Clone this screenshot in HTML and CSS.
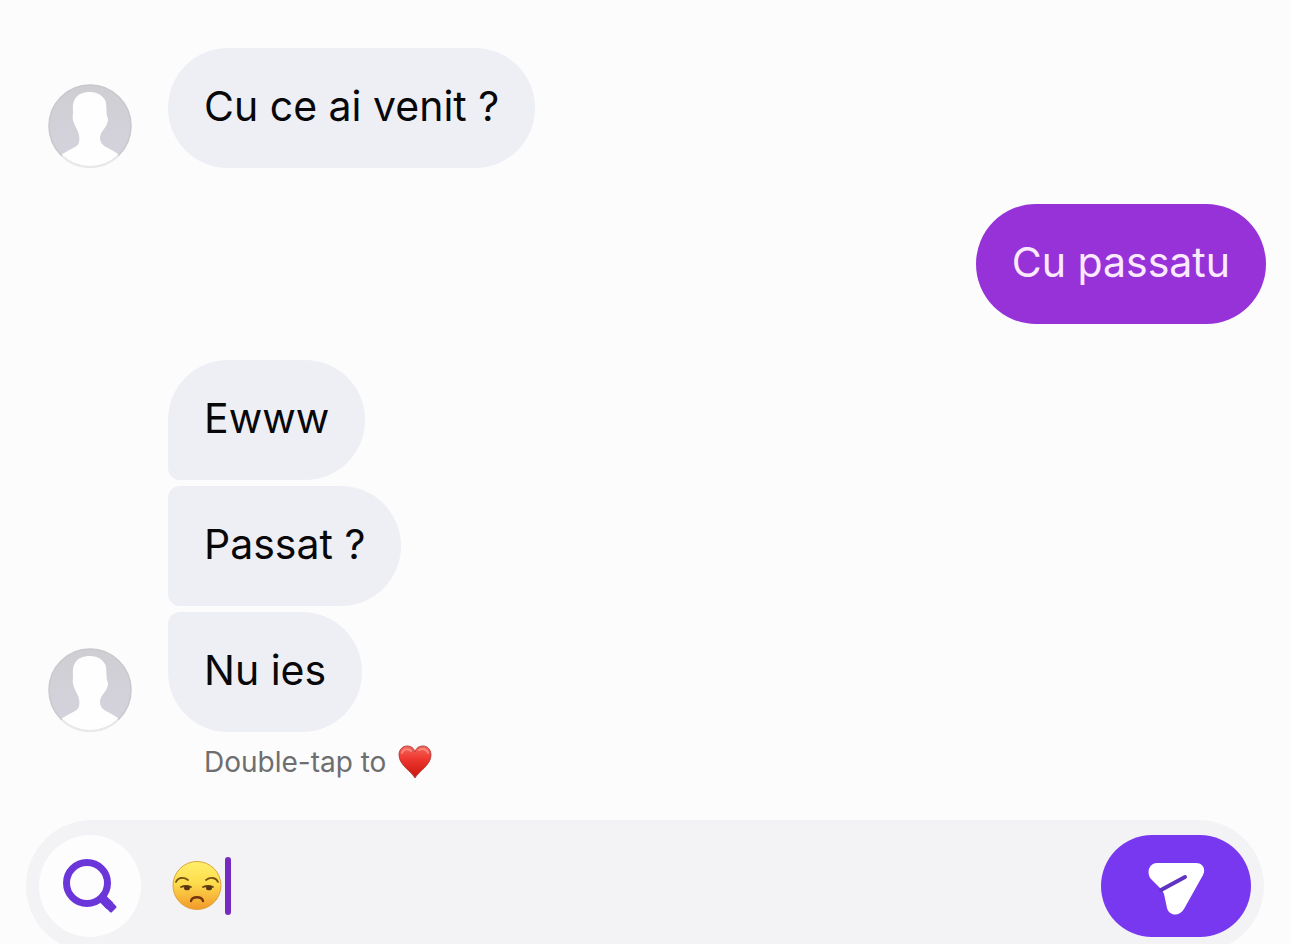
FILE: index.html
```
<!DOCTYPE html>
<html lang="ro">
<head>
  <meta charset="UTF-8">
  <meta name="viewport" content="width=device-width, initial-scale=1.0">
  <title>Chat</title>
  <link rel="stylesheet" href="styles.css">
</head>
<body>
  <!-- shared avatar silhouette -->
  <svg width="0" height="0" class="defs" aria-hidden="true">
    <defs>
      <linearGradient id="avatar-bg" x1="0" y1="0" x2="0" y2="1">
        <stop offset="0" stop-color="#cfced2"/>
        <stop offset="1" stop-color="#d5d4df"/>
      </linearGradient>
      <clipPath id="avatar-clip"><circle cx="42" cy="42" r="41"/></clipPath>
      <symbol id="avatar" viewBox="0 0 84 84">
        <circle cx="42" cy="42" r="41" fill="url(#avatar-bg)"/>
        <path clip-path="url(#avatar-clip)" fill="#fefefe" d="M42 8C49 8 54 11 57 16C59 20 58 26 59 32Q61 35 59 40C57 45 53 47 52 53C52 58 54 61 58 63C63 66 68 68 71 71L77 84H8L13 71C17 68 22 66 27 63C31 61 32 57 31 51C30 46 27 43 26 39Q24 35 25 30C25 25 24 20 27 15C30 10 35 8 42 8Z"/>
        <circle cx="42" cy="42" r="41" fill="none" stroke="#c9c8cd" stroke-width="1.5"/>
        <path d="M14 72A41 41 0 0 0 70 72" fill="none" stroke="#e9e9ec" stroke-width="2"/>
      </symbol>
    </defs>
  </svg>

  <main class="messages">
    <div class="row">
      <svg class="avatar" role="img" aria-label="Profile picture"><use href="#avatar"/></svg>
      <div class="group">
        <p class="bubble">Cu ce ai venit ?</p>
      </div>
    </div>

    <div class="row sent">
      <p class="bubble">Cu passatu</p>
    </div>

    <div class="row">
      <svg class="avatar" role="img" aria-label="Profile picture"><use href="#avatar"/></svg>
      <div class="group">
        <p class="bubble first">Ewww</p>
        <p class="bubble middle">Passat ?</p>
        <p class="bubble last">Nu ies</p>
      </div>
    </div>

    <p class="hint">
      Double-tap to
      <svg class="heart" viewBox="0 0 34 34" role="img" aria-label="heart">
        <defs>
          <linearGradient id="heart-fill" x1="0" y1="0" x2="0" y2="1">
            <stop offset="0" stop-color="#f4675c"/>
            <stop offset=".4" stop-color="#ee382f"/>
            <stop offset="1" stop-color="#c9150f"/>
          </linearGradient>
        </defs>
        <path d="M17 33C13 26 1 20 1 10C1 4 5 1 9 1C13 1 16 3 17 7C18 3 21 1 25 1C29 1 33 4 33 10C33 20 21 26 17 33Z" fill="url(#heart-fill)" stroke="#a8342e" stroke-width=".8"/>
        <path d="M4 8C5 4 10 3 13 6M21 5C24 3 29 4 30 8" fill="none" stroke="#fb9c92" stroke-width="2" stroke-linecap="round" opacity=".7"/>
      </svg>
    </p>
  </main>

  <form class="composer">
    <button type="button" class="search" aria-label="Search">
      <svg viewBox="0 0 56 56">
        <circle cx="25" cy="25" r="20.5" fill="none" stroke="#6b36d9" stroke-width="7"/>
        <path d="M38 38L48 48" stroke="#6b36d9" stroke-width="9"/>
        <path d="M47 43L53 49L49 53L43 47Z" fill="#6b36d9" stroke="#6b36d9" stroke-width="3" stroke-linejoin="round"/>
      </svg>
    </button>
    <div class="field">
      <svg class="emoji" viewBox="0 0 50 50" role="img" aria-label="unamused face">
        <defs>
          <linearGradient id="face" x1="0" y1="0" x2="0" y2="1">
            <stop offset="0" stop-color="#fff06a"/>
            <stop offset=".45" stop-color="#fddc4c"/>
            <stop offset="1" stop-color="#f2982a"/>
          </linearGradient>
        </defs>
        <circle cx="25" cy="24.500" r="24" fill="url(#face)" stroke="#dfa43b" stroke-width="1"/>
        <path d="M4 21C6 16 12 16 16 19M34 19C38 16 44 16 46 21" fill="none" stroke="#785214" stroke-width="1.8" stroke-linecap="round"/>
        <path d="M9 26Q14 24 19 26M31 26Q36 24 41 26" fill="none" stroke="#644013" stroke-width="1.8" stroke-linecap="round"/>
        <ellipse cx="15" cy="27" rx="3" ry="2.3" fill="#573510"/>
        <ellipse cx="37" cy="27" rx="3" ry="2.3" fill="#573510"/>
        <path d="M19 40C20 35 30 35 31 40" fill="none" stroke="#73350f" stroke-width="2.4" stroke-linecap="round"/>
      </svg>
      <span class="caret"></span>
      <input type="text" aria-label="Message">
    </div>
    <button type="submit" class="send" aria-label="Send">
      <svg viewBox="0 0 58 58">
        <path d="M10 6H49C56 6 59 12 56 18L37 52C32 60 22 59 20 51L17 37C16 35 16 34 14 32L4 22C-1 16 2 6 10 6Z" fill="#fff"/>
        <path d="M14 33L38 20" stroke="#6034c2" stroke-width="4" stroke-linecap="round"/>
      </svg>
    </button>
  </form>
</body>
</html>
```
FILE: styles.css
```
:root {
  --bg: #fcfcfc;
  --received: #eeeff4;
  --sent: #9632d8;
  --accent: #7838f0;
  --radius: 60px;
}

* {
  box-sizing: border-box;
  margin: 0;
  padding: 0;
}

body {
  height: 100vh;
  overflow: hidden;
  background: var(--bg);
  color: #08080a;
  font-family: Inter, "Liberation Sans", sans-serif;
}

.defs {
  position: absolute;
}

.messages {
  padding: 48px 24px 0 48px;
}

.row {
  display: flex;
  align-items: flex-end;
  gap: 36px;
  margin-bottom: 36px;
}

.row.sent {
  justify-content: flex-end;
}

.avatar {
  width: 84px;
  height: 84px;
  flex: none;
}

.group {
  display: flex;
  flex-direction: column;
  align-items: flex-start;
  gap: 6px;
}

.bubble {
  padding: 32px 36px 36px;
  border-radius: var(--radius);
  background: var(--received);
  font-size: 41px;
  line-height: 52px;
}

.sent .bubble {
  background: var(--sent);
  color: #fbeaff;
}

.bubble.first {
  border-bottom-left-radius: 12px;
}

.bubble.middle {
  border-top-left-radius: 12px;
  border-bottom-left-radius: 12px;
}

.bubble.last {
  border-top-left-radius: 12px;
}

.hint {
  display: flex;
  align-items: center;
  gap: 12px;
  margin: -24px 0 40px 156px;
  color: #6e6e70;
  font-size: 28px;
  line-height: 36px;
}

.heart {
  width: 34px;
  height: 34px;
}

.composer {
  display: flex;
  align-items: center;
  margin: 0 26px;
  padding: 15px 13px;
  border-radius: 66px;
  background: #f3f3f5;
}

.composer button {
  display: flex;
  align-items: center;
  justify-content: center;
  flex: none;
  height: 102px;
  border: none;
  cursor: pointer;
}

.composer .search {
  width: 102px;
  border-radius: 50%;
  background: #fdfdfe;
}

.search svg {
  width: 56px;
  height: 56px;
}

.field {
  display: flex;
  align-items: center;
  flex: 1;
  min-width: 0;
  padding-left: 31px;
}

.emoji {
  width: 50px;
  height: 50px;
  flex: none;
}

.caret {
  width: 6px;
  height: 58px;
  margin-left: 3px;
  border-radius: 3px;
  background: #752bc0;
}

.field input {
  flex: 1;
  min-width: 0;
  height: 60px;
  border: none;
  outline: none;
  background: transparent;
  font: inherit;
  font-size: 41px;
}

.composer .send {
  width: 150px;
  border-radius: 51px;
  background: var(--accent);
}

.send svg {
  width: 58px;
  height: 58px;
}
```
